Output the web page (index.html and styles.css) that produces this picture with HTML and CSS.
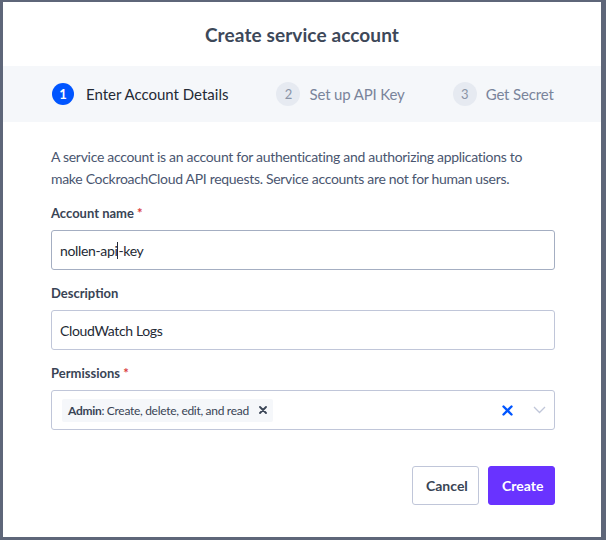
FILE: index.html
```html
<!DOCTYPE html>
<html>
<head>
<meta charset="utf-8">
<link rel="stylesheet" href="styles.css">
</head>
<body>
<div class="modal">
  <div class="header"><h1 class="title">Create service account</h1></div>
  <div class="steps">
    <div class="step active"><span class="num">1</span><span class="label">Enter Account Details</span></div>
    <div class="step"><span class="num">2</span><span class="label">Set up API Key</span></div>
    <div class="step"><span class="num">3</span><span class="label">Get Secret</span></div>
  </div>
  <div class="body">
    <p class="intro">A service account is an account for authenticating and authorizing applications to make CockroachCloud API requests. Service accounts are not for human users.</p>
    <div class="field">
      <div class="flabel">Account name <span class="req">*</span></div>
      <div class="input focused">nollen-api<span class="caret"></span>-key</div>
    </div>
    <div class="field">
      <div class="flabel">Description</div>
      <div class="input">CloudWatch Logs</div>
    </div>
    <div class="field">
      <div class="flabel">Permissions <span class="req">*</span></div>
      <div class="input select">
        <span class="chip"><b>Admin</b>: Create, delete, edit, and read<span class="chip-x">
          <svg width="8" height="8" viewBox="0 0 8 8"><path d="M1 1L7 7M7 1L1 7" stroke="#394455" stroke-width="1.8" stroke-linecap="round"/></svg></span></span>
        <span class="spacer"></span>
        <span class="clear"><svg width="11" height="11" viewBox="0 0 11 11"><path d="M1.5 1.5L9.5 9.5M9.5 1.5L1.5 9.5" stroke="#0055ff" stroke-width="2.4" stroke-linecap="round"/></svg></span>
        <span class="chev"><svg width="13" height="8" viewBox="0 0 13 8"><path d="M1 1L6.5 6.5L12 1" fill="none" stroke="#c0c6d9" stroke-width="1.3"/></svg></span>
      </div>
    </div>
    <div class="actions">
      <button class="btn btn-cancel">Cancel</button>
      <button class="btn btn-create">Create</button>
    </div>
  </div>
</div>
</body>
</html>
```

FILE: styles.css
```css
* { box-sizing: border-box; }
html, body { margin: 0; padding: 0; }
body {
  background: #5e6679;
  width: 606px;
  height: 540px;
  overflow: hidden;
  font-family: Lato, "Liberation Sans", sans-serif;
}
.modal {
  margin: 2px 5px 3px 3px;
  height: 535px;
  background: #ffffff;
  display: flex;
  flex-direction: column;
}
.header {
  height: 64px;
  display: flex;
  align-items: center;
  justify-content: center;
}
.title {
  margin: 0;
  font-size: 19px;
  font-weight: 700;
  color: #3d4859;
  letter-spacing: 0.1px;
}
.steps {
  height: 56px;
  background: #f5f7fa;
  display: flex;
  align-items: center;
  padding-left: 49px;
  gap: 48px;
}
.step {
  display: flex;
  align-items: center;
  gap: 9px;
}
.num {
  width: 24px;
  height: 24px;
  border-radius: 50%;
  background: #e6eaf1;
  color: #8a94a6;
  font-size: 13px;
  font-weight: 400;
  display: flex;
  align-items: center;
  justify-content: center;
}
.label {
  font-size: 15px;
  color: #7a849b;
  letter-spacing: -0.15px;
}
.step.active .num {
  width: 22px;
  height: 22px;
  margin-right: 3px;
  background: #0055ff;
  color: #fff;
  font-weight: 700;
}
.step.active .label { color: #242a35; letter-spacing: 0; }
.body {
  padding: 24px 46px 0 48px;
  display: flex;
  flex-direction: column;
}
.intro {
  margin: 0;
  font-size: 14px;
  line-height: 22px;
  letter-spacing: -0.3px;
  color: #4a5670;
}
.field { margin-top: 14px; }
.flabel {
  font-size: 13px;
  line-height: 18px;
  font-weight: 700;
  color: #394455;
  margin-bottom: 8px;
}
.req { color: #d93b3b; }
.input {
  height: 40px;
  border: 1px solid #c0c6d9;
  border-radius: 3px;
  padding: 0 8px;
  display: flex;
  align-items: center;
  font-size: 14px;
  letter-spacing: -0.35px;
  color: #242a35;
}
.input.focused { border-color: #a4aec2; }
.caret {
  display: inline-block;
  width: 1px;
  height: 17px;
  background: #242a35;
}
.select { padding: 0 8px 0 10px; letter-spacing: 0; }
.chip {
  background: #f5f7fa;
  height: 23px;
  padding: 0 6px;
  display: flex;
  align-items: center;
  font-size: 12px;
  letter-spacing: -0.3px;
  color: #394455;
  border-radius: 2px;
}
.chip b { font-weight: 700; }
.chip-x { margin-left: 10px; display: flex; align-items: center; }
.spacer { flex: 1; }
.clear { display: flex; align-items: center; margin-right: 20px; }
.chev { display: flex; align-items: center; }
.actions {
  margin-top: 36px;
  display: flex;
  justify-content: flex-end;
  gap: 9px;
}
.btn {
  height: 39px;
  border-radius: 3px;
  font-family: Lato, "Liberation Sans", sans-serif;
  font-size: 14px;
  font-weight: 700;
  padding: 0 13px;
  cursor: pointer;
}
.btn-cancel {
  background: #fff;
  border: 1px solid #c0c6d9;
  color: #394455;
  width: 67px;
}
.btn-create {
  background: #6933ff;
  border: 1px solid #6933ff;
  color: #fff;
  width: 67px;
}
```
